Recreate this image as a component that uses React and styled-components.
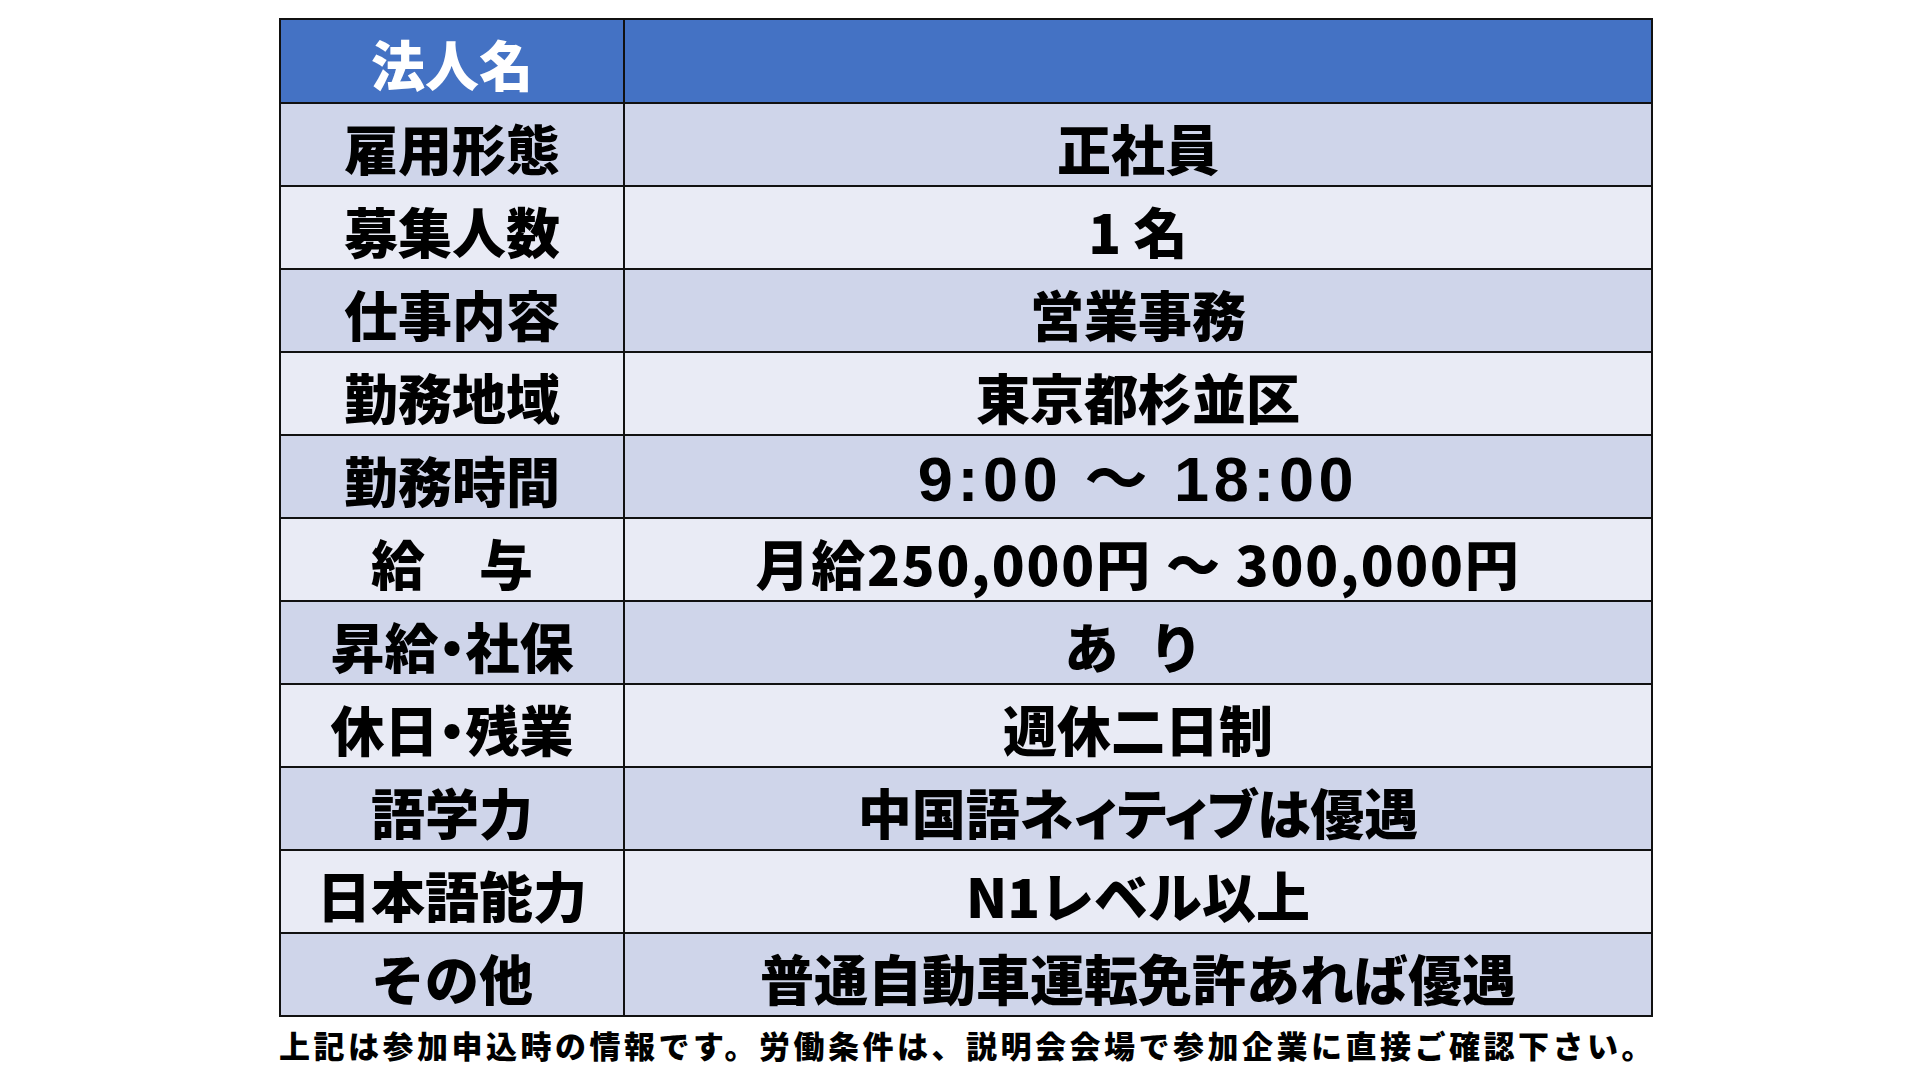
import styled, { createGlobalStyle } from 'styled-components';

const GlobalStyle = createGlobalStyle`
    body {
        margin: 0;
        background: #ffffff;
    }
`;

const rows = [
    { label: '雇用形態', value: '正社員' },
    { label: '募集人数', value: '1 名' },
    { label: '仕事内容', value: '営業事務' },
    { label: '勤務地域', value: '東京都杉並区' },
    { label: '勤務時間', value: '9:00 ～ 18:00', kind: 'latin' },
    { label: '給　与', value: '月給250,000円 ～ 300,000円', kind: 'wide' },
    { label: '昇給・社保', value: 'あ り', kind: 'spaced' },
    { label: '休日・残業', value: '週休二日制' },
    { label: '語学力', value: '中国語ネィティブは優遇', kind: 'palt' },
    { label: '日本語能力', value: 'N1レベル以上' },
    { label: 'その他', value: '普通自動車運転免許あれば優遇' },
];

const spacing = {
    latin: '4.6px',
    wide: '1.8px',
    spaced: '9px',
};

const App = () => {
    return (
        <Page>
            <GlobalStyle />
            <Table>
                <tbody>
                    <HeadRow>
                        <LabelCell>法人名</LabelCell>
                        <ValueCell />
                    </HeadRow>
                    {rows.map((row, i) => (
                        <BodyRow key={row.label} $dark={i % 2 === 0}>
                            <LabelCell $palt={row.label.includes('・')}>{row.label}</LabelCell>
                            <ValueCell $kind={row.kind}>{row.value}</ValueCell>
                        </BodyRow>
                    ))}
                </tbody>
            </Table>
            <Note>
                上記は参加申込時の情報です。労働条件は、説明会会場で参加企業に直接ご確認下さい。
            </Note>
        </Page>
    );
};

export default App;

const Page = styled.div`
    width: 1920px;
    height: 1080px;
    box-sizing: border-box;
    padding: 18px 0 0 279px;
    font-family: 'Noto Sans CJK JP', 'Noto Sans', sans-serif;
    color: #000000;
`;

const Table = styled.table`
    width: 1374px;
    border-collapse: collapse;
    table-layout: fixed;
`;

const HeadRow = styled.tr`
    height: 84px;
    background: #4472c4;
    color: #ffffff;
`;

const BodyRow = styled.tr`
    height: 83px;
    background: ${(p) => (p.$dark ? '#cfd5ea' : '#e9ebf5')};
`;

const LabelCell = styled.td`
    width: 342px;
    border: 2px solid #111111;
    padding: 6px 0 0;
    text-align: center;
    vertical-align: middle;
    font-size: 54px;
    font-weight: 900;
    line-height: 1;
    white-space: nowrap;
    font-feature-settings: ${(p) => (p.$palt ? "'palt'" : 'normal')};
`;

const ValueCell = styled.td`
    border: 2px solid #111111;
    padding: 6px 0 0;
    text-align: center;
    vertical-align: middle;
    font-size: ${(p) => (p.$kind === 'latin' ? '63px' : '54px')};
    font-family: ${(p) =>
        p.$kind === 'latin'
            ? "'Liberation Sans', 'Noto Sans CJK JP', sans-serif"
            : "'Noto Sans CJK JP', 'Noto Sans', sans-serif"};
    font-weight: ${(p) => (p.$kind === 'latin' ? 700 : 900)};
    letter-spacing: ${(p) => spacing[p.$kind] || '0'};
    font-feature-settings: ${(p) => (p.$kind === 'palt' ? "'palt'" : 'normal')};
    line-height: 1;
    white-space: nowrap;
`;

const Note = styled.div`
    margin-top: 9px;
    font-size: 31px;
    font-weight: 900;
    letter-spacing: 3.5px;
    line-height: 1.2;
    white-space: nowrap;
`;
